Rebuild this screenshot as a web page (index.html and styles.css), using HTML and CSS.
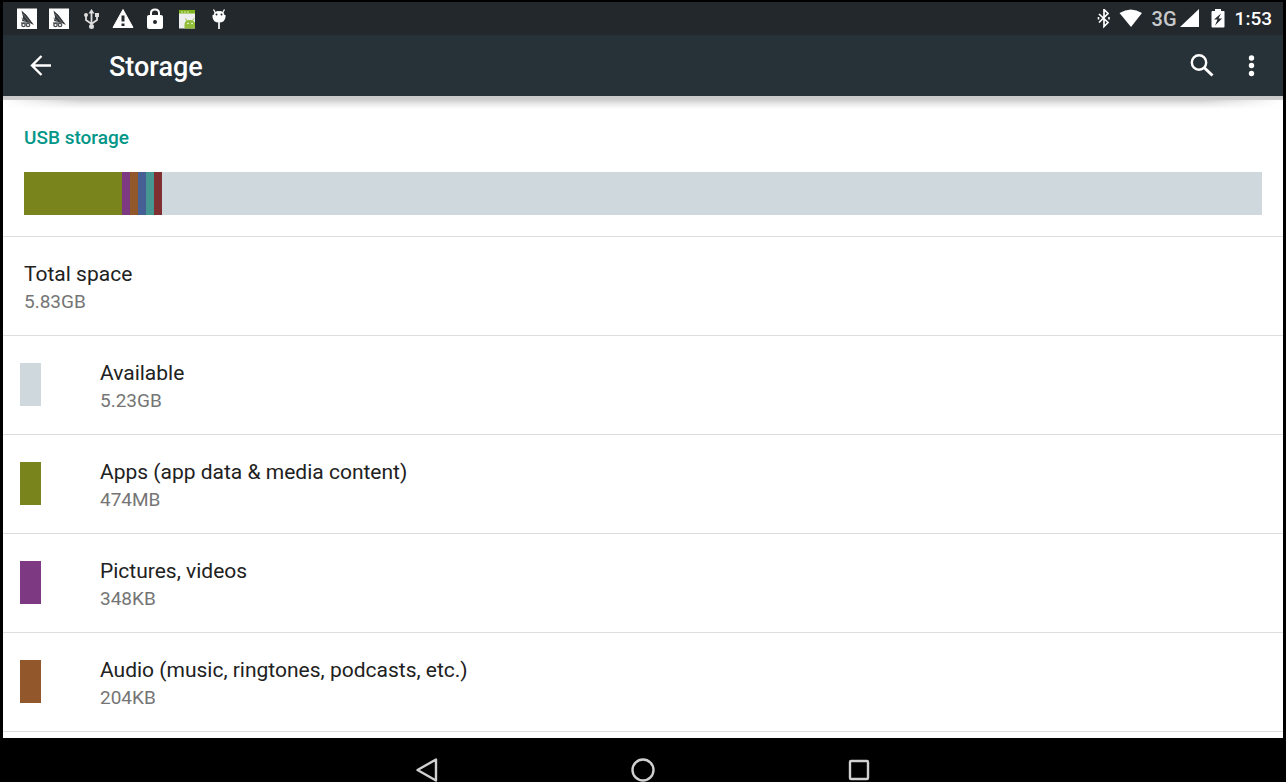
FILE: index.html
```html
<!DOCTYPE html>
<html lang="en">
<head>
<meta charset="utf-8">
<meta name="viewport" content="width=device-width, initial-scale=1">
<title>Storage</title>
<link rel="stylesheet" href="styles.css">
</head>
<body class="device">
<svg class="defs" width="0" height="0" aria-hidden="true">
  <symbol id="sail" viewBox="0 0 32 33">
    <rect x="6" y="6.500" width="20" height="20.500" fill="#fff"/>
    <path d="M10.500 8.500L15.500 13L23 23L17.500 20.500L11 19L12 15Z" fill="#34383a"/>
    <path d="M12 12L19 20.500M10.500 16L15 19.500" stroke="#777b7d" stroke-width=".8"/>
    <g fill="none" stroke="#4a4e50" stroke-width="1.300"><circle cx="12.500" cy="23" r="1.700"/><circle cx="17" cy="23" r="1.700"/><path d="M10 21H18"/></g>
  </symbol>
</svg>
<header>
  <div class="status">
    <div class="notices">
      <svg class="notice"><use href="#sail"/></svg>
      <svg class="notice"><use href="#sail"/></svg>
      <svg class="notice" viewBox="0 0 32 33"><g fill="none" stroke="#ddd" stroke-width="1.800"><path d="M16.500 10V25M11 13V18L16.500 22L22 18V13"/></g><path d="M13.500 11.500L16.500 7L19.500 11.500Z" fill="#ddd"/><circle cx="11" cy="13" r="2" fill="#ddd"/><rect x="20" y="11" width="4" height="4" fill="#ddd"/><circle cx="16.500" cy="24.500" r="2.500" fill="#ddd"/></svg>
      <svg class="notice" viewBox="0 0 32 33"><path d="M16 7.500L26 25.500H6Z" fill="#fff" stroke="#fff" stroke-linejoin="round"/><path d="M14.500 13.500H17.500V19.500H14.500ZM14.500 21.500H17.500V24H14.500Z" fill="#23292d"/></svg>
      <svg class="notice" viewBox="0 0 32 33"><rect x="8" y="13" width="16" height="14" rx="2" fill="#fff"/><path d="M12 14V11Q12 7.500 16 7.500T20 11V14" fill="none" stroke="#fff" stroke-width="2"/><circle cx="16" cy="20" r="2" fill="#23292d"/></svg>
      <svg class="notice" viewBox="0 0 32 33"><path d="M8 8H24V26.500H8Z" fill="#eee"/><path d="M8 8H24V11.500H8Z" fill="#80b51c"/><path d="M10 10H19" stroke="#dceab8" stroke-width="1" stroke-dasharray="2 1"/><path d="M13.500 26.500V22Q14 18 19 18Q23 18 24 21V26.500Z" fill="#91bd3b"/><path d="M16 19L14.500 16.500M21.500 18.500L23 16.500" stroke="#91bd3b"/><circle cx="17" cy="21.500" r=".8" fill="#fff"/><circle cx="21" cy="21.500" r=".8" fill="#fff"/></svg>
      <svg class="notice" viewBox="0 0 32 33"><path d="M9.500 13H22.500V15Q22 20.500 16 20.500T9.500 15Z" fill="#fff"/><path d="M10.500 14Q10.500 9 16 9T21.500 14" fill="#fff"/><path d="M12.500 11L10.500 7.500M19.500 11L21.500 7.500" stroke="#fff" stroke-width="1.300"/><path d="M16 20V27" stroke="#ddd" stroke-width="2"/><circle cx="13.500" cy="12.500" r="1" fill="#23292d"/><circle cx="18.500" cy="12.500" r="1" fill="#23292d"/></svg>
    </div>
    <div class="system">
      <svg class="sys-bt" viewBox="0 0 14 20"><path d="M2 5L11 13.500L7 17.500V.5L11 4.500L2 13.500" fill="none" stroke="#fff" stroke-width="1.700"/><path d="M1.500 8V10.500M12 8V10.500" stroke="#fff" stroke-width="1.600"/></svg>
      <svg class="sys-wifi" viewBox="0 0 24 20"><path d="M.5 4Q12 -3 23 4L12 18Z" fill="#fff"/></svg>
      <span class="net">3G</span>
      <svg class="sys-signal" viewBox="0 0 19 20"><path d="M0 18L19 0V18Z" fill="#fff"/></svg>
      <svg class="sys-battery" viewBox="0 0 14 20"><path d="M4 0H10V2H13Q13.500 2 13.500 3V17.500Q13.500 18.500 12.500 18.500H1.500Q.5 18.500 .5 17.500V3Q.5 2 1.500 2H4Z" fill="#fff"/><path d="M10 4.500L3 10.500H6.500L4 16.500L11 9.500H7.500Z" fill="#23292d"/></svg>
      <time class="clock">1:53</time>
    </div>
  </div>
  <div class="appbar">
    <button class="icon-button" type="button" aria-label="Back"><svg width="24" height="24" viewBox="0 0 24 24"><path d="M23 11.500H4M13.500 2L4 11.500L13.500 21" fill="none" stroke="#fff" stroke-width="2.400"/></svg></button>
    <h1 class="title">Storage</h1>
    <button class="icon-button" type="button" aria-label="Search"><svg width="24" height="24" viewBox="0 0 24 24"><circle cx="9" cy="8.500" r="7.200" fill="none" stroke="#fff" stroke-width="2.400"/><path d="M14 13.500L22.500 21.500" stroke="#fff" stroke-width="3"/></svg></button>
    <button class="icon-button more" type="button" aria-label="More options"><svg width="24" height="24" viewBox="0 0 24 24"><g fill="#fff"><circle cx="12.500" cy="4" r="2.700"/><circle cx="12.500" cy="11.500" r="2.700"/><circle cx="12.500" cy="19.500" r="2.700"/></g></svg></button>
  </div>
</header>
<main class="content">
  <section class="usage">
    <h2 class="category">USB storage</h2>
    <div class="meter">
      <span class="segment apps-share apps"></span><span class="segment pictures"></span><span class="segment audio"></span><span class="segment downloads"></span><span class="segment cached"></span><span class="segment misc"></span>
    </div>
  </section>
  <ul class="list">
    <li class="row"><div class="label"><div class="name">Total space</div><div class="size">5.83GB</div></div></li>
    <li class="row keyed"><span class="swatch available"></span><div class="label"><div class="name">Available</div><div class="size">5.23GB</div></div></li>
    <li class="row keyed"><span class="swatch apps"></span><div class="label"><div class="name">Apps (app data &amp; media content)</div><div class="size">474MB</div></div></li>
    <li class="row keyed"><span class="swatch pictures"></span><div class="label"><div class="name">Pictures, videos</div><div class="size">348KB</div></div></li>
    <li class="row keyed"><span class="swatch audio"></span><div class="label"><div class="name">Audio (music, ringtones, podcasts, etc.)</div><div class="size">204KB</div></div></li>
  </ul>
</main>
<nav class="navbar">
  <button class="nav-button" type="button" aria-label="Back"><svg width="24" height="26" viewBox="0 0 24 26"><path d="M21 2.500V23.500L2.500 13Z" fill="none" stroke="#d0d0d0" stroke-width="2.400" stroke-linejoin="round"/></svg></button>
  <button class="nav-button" type="button" aria-label="Home"><svg width="24" height="26" viewBox="0 0 24 26"><circle cx="12" cy="13" r="10.500" fill="none" stroke="#d0d0d0" stroke-width="2.400"/></svg></button>
  <button class="nav-button" type="button" aria-label="Recent apps"><svg width="24" height="26" viewBox="0 0 24 26"><rect x="3" y="4" width="18" height="18" rx="1" fill="none" stroke="#d0d0d0" stroke-width="2.400"/></svg></button>
</nav>
</body>
</html>
```
FILE: styles.css
```css
* {
  box-sizing: border-box;
}

.device {
  display: flex;
  flex-direction: column;
  height: 100vh;
  margin: 0;
  padding: 2px 3px 0;
  background: #000;
  font-family: Roboto, "Noto Sans", sans-serif;
  overflow: hidden;
}

.defs {
  position: absolute;
}

svg {
  display: block;
  flex: none;
}

.status {
  display: flex;
  justify-content: space-between;
  height: 33px;
  padding: 0 11px 0 8px;
  background: #23282c;
  color: #fff;
}

.notices,
.system {
  display: flex;
}

.system {
  align-items: center;
}

.notice {
  width: 32px;
  height: 33px;
}

.sys-bt,
.sys-battery {
  width: 14px;
  height: 20px;
}

.sys-wifi {
  width: 24px;
  height: 20px;
  margin: 0 9px 0 8px;
}

.net {
  color: #c8cacb;
  font-family: Roboto, sans-serif;
  font-size: 20px;
  font-weight: 500;
  line-height: 32px;
}

.sys-signal {
  width: 19px;
  height: 20px;
  margin: 0 12px 0 3px;
}

.clock {
  margin-left: 10px;
  font-size: 19px;
  font-weight: 500;
  line-height: 33px;
}

.appbar {
  display: flex;
  align-items: center;
  padding: 0 8px 0 13px;
  height: 61px;
  background: #273238;
  color: #fff;
}

.icon-button {
  display: flex;
  align-items: center;
  justify-content: center;
  width: 48px;
  height: 48px;
  padding: 0;
  border: 0;
  background: none;
}

.more {
  margin-left: 1px;
}

.title {
  flex: 1;
  margin: 0 0 0 45px;
  padding-top: 2px;
  font-size: 27px;
  font-weight: 500;
  line-height: 36px;
}

.content {
  flex: 1;
  min-height: 0;
  overflow: hidden;
  background:
    linear-gradient(90deg, #fff, #fff0 80px, #fff0 calc(100% - 80px), #fff) 0 4px / 100% 10px no-repeat,
    linear-gradient(#c9c9c9, #cecece 4px, #e4e4e4 7px, #fff 13px);
}

.usage {
  padding: 28px 21px 21px;
  border-bottom: 1px solid #dedede;
}

.category {
  margin: 0 0 20px;
  color: #009688;
  font-size: 19px;
  font-weight: 500;
  line-height: 28px;
}

.meter {
  display: flex;
  height: 43px;
  background: #cfd8dd;
}

.segment {
  width: 8px;
}

.apps-share {
  width: 98px;
}

.available {
  background: #cfd8dd;
}

.apps {
  background: #7a841c;
}

.pictures {
  background: #7d3a82;
}

.audio {
  background: #92582c;
}

.downloads {
  background: #466096;
}

.cached {
  background: #469692;
}

.misc {
  background: #803030;
}

.list {
  margin: 0;
  padding: 0;
  list-style: none;
}

.row {
  display: flex;
  align-items: center;
  height: 99px;
  padding: 0 21px;
  border-bottom: 1px solid #dedede;
}

.keyed {
  gap: 59px;
  padding-left: 17px;
}

.swatch {
  flex: none;
  width: 21px;
  height: 43px;
  margin-bottom: 1px;
}

.label {
  padding-top: 2px;
}

.name {
  color: #212121;
  font-size: 21px;
  line-height: 29px;
}

.size {
  color: #757575;
  font-size: 19px;
  line-height: 26px;
}

.navbar {
  display: flex;
  justify-content: center;
  gap: 120px;
  height: 44px;
}

.nav-button {
  display: flex;
  justify-content: center;
  width: 96px;
  padding: 19px 0 0;
  border: 0;
  background: none;
}
```
